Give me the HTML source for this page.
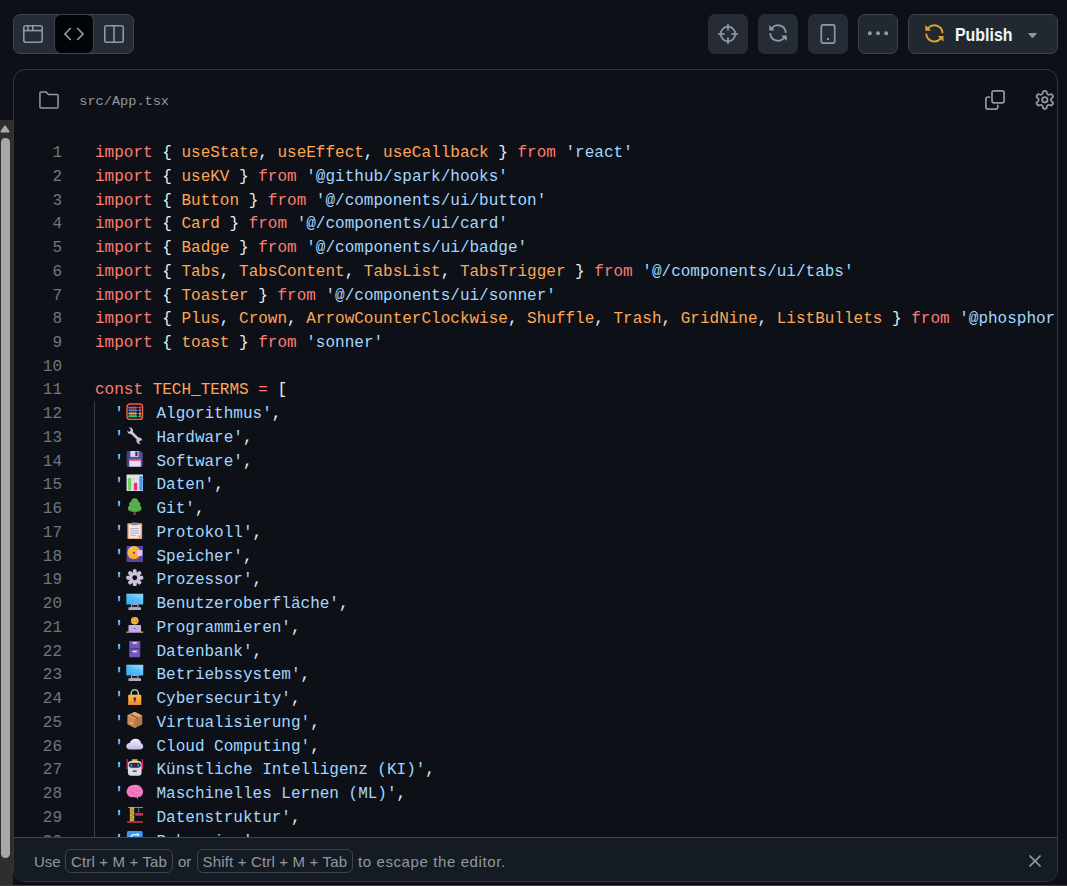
<!DOCTYPE html>
<html><head><meta charset="utf-8">
<style>
*{box-sizing:border-box}
html,body{margin:0;padding:0}
body{width:1067px;height:886px;overflow:hidden;position:relative;background:#0d1117;font-family:"Liberation Sans",sans-serif}
.abs{position:absolute}
.seg{left:13px;top:14px;width:121px;height:40px;background:#262c36;border:1px solid #3d444d;border-radius:7px}
.segact{left:54px;top:14px;width:40px;height:40px;background:#010409;border:1px solid #3d444d;border-radius:7px}
.ib{top:14px;width:40px;height:40px;background:#262c36;border-radius:7px}
.ib2{border:1px solid #3d444d;background:#212830}
.pub{left:908px;top:14px;width:150px;height:40px;background:#212830;border:1px solid #3d444d;border-radius:7px}
.pubt{left:955px;top:24.6px;font:bold 17.6px "Liberation Sans",sans-serif;color:#f0f6fc;line-height:20px;transform:scaleX(0.905);transform-origin:0 0}
.panel{left:13px;top:69px;width:1045px;height:813px;border:1px solid #30363d;border-radius:12px;background:#0d1117;overflow:hidden}
.fname{left:79.3px;top:94px;font:13.6px "Liberation Mono",monospace;color:#9198a1;line-height:16px;white-space:pre}
.ln{position:absolute;left:20px;width:42px;text-align:right;font:16px/23.74px "Liberation Mono",monospace;color:#6e7681;white-space:pre}
.cl{position:absolute;left:95px;width:961px;overflow:hidden;font:16px/23.74px "Liberation Mono",monospace;color:#e6edf3;white-space:pre;height:23.74px}
.k{color:#ff7b72}.o{color:#ffa657}.s{color:#a5d6ff}.p{color:#e6edf3}
.em{display:inline-block;width:23.1px;height:17px;vertical-align:top;position:relative}
.em svg{position:absolute;left:2.2px;top:-0.4px;width:17.5px;height:17.5px}
.guide{left:94px;top:401px;width:1px;height:440px;background:#3a3d42}
.foot{left:14px;top:837px;width:1043px;height:44px;background:#151b23;border-top:1px solid #3d444d;border-radius:0 0 11px 11px}
.ft{font:15px "Liberation Sans",sans-serif;color:#9198a1;line-height:18px;top:852.5px;white-space:pre}
.kbd{top:849px;height:24px;border:1px solid #3d444d;border-radius:6px}
.sb{left:0;top:120px;width:13px;height:765px;background:#2e2e2e}
.thumb{left:1px;top:138px;width:9px;height:720px;background:#a8a8a8;border-radius:4.5px}
</style></head><body>
<!-- segmented control -->
<div class="abs seg"></div>
<div class="abs segact"></div>
<svg class="abs" style="left:23px;top:25px" width="20" height="18" viewBox="0 0 20 18" fill="none" stroke="#9198a1" stroke-width="1.6">
 <rect x="0.8" y="0.8" width="18.4" height="16.4" rx="2"/><line x1="0.8" y1="5.6" x2="19.2" y2="5.6"/>
 <line x1="5" y1="1" x2="5" y2="5.6"/><line x1="9.8" y1="1" x2="9.8" y2="5.6"/>
</svg>
<svg class="abs" style="left:64px;top:27px" width="20" height="14" viewBox="0 0 20 14" fill="none" stroke="#9198a1" stroke-width="1.7">
 <polyline points="6.8,1 1,7 6.8,13"/><polyline points="13.2,1 19,7 13.2,13"/>
</svg>
<svg class="abs" style="left:104px;top:25px" width="20" height="18" viewBox="0 0 20 18" fill="none" stroke="#9198a1" stroke-width="1.6">
 <rect x="0.8" y="0.8" width="18.4" height="16.4" rx="1.5"/><line x1="10" y1="1" x2="10" y2="17"/>
</svg>

<!-- right buttons -->
<div class="abs ib" style="left:708px"></div>
<div class="abs ib" style="left:758px"></div>
<div class="abs ib" style="left:808px"></div>
<div class="abs ib ib2" style="left:858px"></div>
<svg class="abs" style="left:718px;top:24px" width="20" height="20" viewBox="0 0 20 20" fill="none" stroke="#9198a1" stroke-width="1.7">
 <circle cx="10" cy="10" r="7.3"/><line x1="10" y1="0" x2="10" y2="6.6"/><line x1="10" y1="13.4" x2="10" y2="20"/><line x1="0" y1="10" x2="6.6" y2="10"/><line x1="13.4" y1="10" x2="20" y2="10"/>
</svg>
<svg class="abs" style="left:767.8px;top:23.4px" width="20" height="20" viewBox="0 0 16 16"><path fill="#9198a1" d="M1.705 8.005a.75.75 0 0 1 .834.656 5.5 5.5 0 0 0 9.592 2.97l-1.204-1.204a.25.25 0 0 1 .177-.427h3.646a.25.25 0 0 1 .25.25v3.646a.25.25 0 0 1-.427.177l-1.38-1.38A7.002 7.002 0 0 1 1.05 8.84a.75.75 0 0 1 .656-.834ZM8 2.5a5.487 5.487 0 0 0-4.131 1.869l1.204 1.204A.25.25 0 0 1 4.896 6H1.25A.25.25 0 0 1 1 5.75V2.104a.25.25 0 0 1 .427-.177l1.38 1.38A7.002 7.002 0 0 1 14.95 7.16a.75.75 0 0 1-1.49.178A5.5 5.5 0 0 0 8 2.5Z"/></svg>
<svg class="abs" style="left:818px;top:24px" width="20" height="20" viewBox="0 0 20 20" fill="none" stroke="#9198a1" stroke-width="1.7">
 <rect x="3.3" y="0.8" width="13.4" height="18.4" rx="1.8"/><rect x="9" y="14" width="2" height="2" fill="#9198a1" stroke="none"/>
</svg>
<svg class="abs" style="left:868px;top:24px" width="20" height="20" viewBox="0 0 20 20" fill="#9198a1">
 <circle cx="1.8" cy="9.35" r="2"/><circle cx="10" cy="9.35" r="2"/><circle cx="18.2" cy="9.35" r="2"/>
</svg>
<div class="abs pub"></div>
<svg class="abs" style="left:923.6px;top:23px" width="20.8" height="20.8" viewBox="0 0 16 16"><path fill="#d9a334" d="M1.705 8.005a.75.75 0 0 1 .834.656 5.5 5.5 0 0 0 9.592 2.97l-1.204-1.204a.25.25 0 0 1 .177-.427h3.646a.25.25 0 0 1 .25.25v3.646a.25.25 0 0 1-.427.177l-1.38-1.38A7.002 7.002 0 0 1 1.05 8.84a.75.75 0 0 1 .656-.834ZM8 2.5a5.487 5.487 0 0 0-4.131 1.869l1.204 1.204A.25.25 0 0 1 4.896 6H1.25A.25.25 0 0 1 1 5.75V2.104a.25.25 0 0 1 .427-.177l1.38 1.38A7.002 7.002 0 0 1 14.95 7.16a.75.75 0 0 1-1.49.178A5.5 5.5 0 0 0 8 2.5Z"/></svg>
<div class="abs pubt">Publish</div>
<svg class="abs" style="left:1027.5px;top:32.5px" width="9" height="5.4" viewBox="0 0 9 5.4"><polygon points="0.6,0.5 8.4,0.5 4.5,4.9" fill="#9198a1" stroke="#9198a1" stroke-width="0.9" stroke-linejoin="round"/></svg>

<!-- panel -->
<div class="abs panel"></div>
<svg class="abs" style="left:39px;top:91px" width="20" height="18" viewBox="0 0 21 18" preserveAspectRatio="none" fill="none" stroke="#9198a1" stroke-width="1.6">
 <path d="M1 2 Q1 1 2 1 H7.5 L10 3.5 H19 Q20 3.5 20 4.5 V16 Q20 17 19 17 H2 Q1 17 1 16 Z"/>
</svg>
<div class="abs fname">src/App.tsx</div>
<svg class="abs" style="left:985px;top:90px" width="20" height="20" viewBox="0 0 20 20" fill="none" stroke="#9198a1" stroke-width="1.7" stroke-linecap="round">
 <rect x="7" y="0.9" width="12.1" height="11.9" rx="2"/><path d="M4.6 7 H2.9 Q0.9 7 0.9 9 V17.1 Q0.9 19.1 2.9 19.1 H10.8 Q12.8 19.1 12.8 17.1 V15.4"/>
</svg>
<svg class="abs" style="left:1034.4px;top:88.9px" width="21.6" height="21.6" viewBox="0 0 24 24" fill="none" stroke="#9198a1" stroke-width="2" stroke-linecap="round" stroke-linejoin="round"><path d="M12.22 2h-.44a2 2 0 0 0-2 2v.18a2 2 0 0 1-1 1.730l-.43.25a2 2 0 0 1-2 0l-.15-.08a2 2 0 0 0-2.73.73l-.22.38a2 2 0 0 0 .73 2.73l.15.1a2 2 0 0 1 1 1.72v.51a2 2 0 0 1-1 1.74l-.15.09a2 2 0 0 0-.73 2.73l.22.38a2 2 0 0 0 2.73.73l.15-.08a2 2 0 0 1 2 0l.43.25a2 2 0 0 1 1 1.73V20a2 2 0 0 0 2 2h.44a2 2 0 0 0 2-2v-.18a2 2 0 0 1 1-1.73l.43-.25a2 2 0 0 1 2 0l.15.08a2 2 0 0 0 2.73-.73l.22-.39a2 2 0 0 0-.73-2.73l-.15-.08a2 2 0 0 1-1-1.740v-.5a2 2 0 0 1 1-1.74l.15-.09a2 2 0 0 0 .73-2.73l-.22-.38a2 2 0 0 0-2.73-.73l-.15.08a2 2 0 0 1-2 0l-.43-.25a2 2 0 0 1-1-1.73V4a2 2 0 0 0-2-2z"/><circle cx="12" cy="12" r="3"/></svg>
<div class="ln" style="top:142.06px">1</div><div class="cl" style="top:142.06px"><span class="k">import</span><span class="p"> { </span><span class="o">useState</span><span class="p">, </span><span class="o">useEffect</span><span class="p">, </span><span class="o">useCallback</span><span class="p"> } </span><span class="k">from</span><span class="p"> </span><span class="s">&#x27;react&#x27;</span></div>
<div class="ln" style="top:165.80px">2</div><div class="cl" style="top:165.80px"><span class="k">import</span><span class="p"> { </span><span class="o">useKV</span><span class="p"> } </span><span class="k">from</span><span class="p"> </span><span class="s">&#x27;@github/spark/hooks&#x27;</span></div>
<div class="ln" style="top:189.54px">3</div><div class="cl" style="top:189.54px"><span class="k">import</span><span class="p"> { </span><span class="o">Button</span><span class="p"> } </span><span class="k">from</span><span class="p"> </span><span class="s">&#x27;@/components/ui/button&#x27;</span></div>
<div class="ln" style="top:213.28px">4</div><div class="cl" style="top:213.28px"><span class="k">import</span><span class="p"> { </span><span class="o">Card</span><span class="p"> } </span><span class="k">from</span><span class="p"> </span><span class="s">&#x27;@/components/ui/card&#x27;</span></div>
<div class="ln" style="top:237.02px">5</div><div class="cl" style="top:237.02px"><span class="k">import</span><span class="p"> { </span><span class="o">Badge</span><span class="p"> } </span><span class="k">from</span><span class="p"> </span><span class="s">&#x27;@/components/ui/badge&#x27;</span></div>
<div class="ln" style="top:260.76px">6</div><div class="cl" style="top:260.76px"><span class="k">import</span><span class="p"> { </span><span class="o">Tabs</span><span class="p">, </span><span class="o">TabsContent</span><span class="p">, </span><span class="o">TabsList</span><span class="p">, </span><span class="o">TabsTrigger</span><span class="p"> } </span><span class="k">from</span><span class="p"> </span><span class="s">&#x27;@/components/ui/tabs&#x27;</span></div>
<div class="ln" style="top:284.50px">7</div><div class="cl" style="top:284.50px"><span class="k">import</span><span class="p"> { </span><span class="o">Toaster</span><span class="p"> } </span><span class="k">from</span><span class="p"> </span><span class="s">&#x27;@/components/ui/sonner&#x27;</span></div>
<div class="ln" style="top:308.24px">8</div><div class="cl" style="top:308.24px"><span class="k">import</span><span class="p"> { </span><span class="o">Plus</span><span class="p">, </span><span class="o">Crown</span><span class="p">, </span><span class="o">ArrowCounterClockwise</span><span class="p">, </span><span class="o">Shuffle</span><span class="p">, </span><span class="o">Trash</span><span class="p">, </span><span class="o">GridNine</span><span class="p">, </span><span class="o">ListBullets</span><span class="p"> } </span><span class="k">from</span><span class="p"> </span><span class="s">&#x27;@phosphor-icons/react&#x27;</span></div>
<div class="ln" style="top:331.98px">9</div><div class="cl" style="top:331.98px"><span class="k">import</span><span class="p"> { </span><span class="o">toast</span><span class="p"> } </span><span class="k">from</span><span class="p"> </span><span class="s">&#x27;sonner&#x27;</span></div>
<div class="ln" style="top:355.72px">10</div><div class="cl" style="top:355.72px"></div>
<div class="ln" style="top:379.46px">11</div><div class="cl" style="top:379.46px"><span class="k">const</span><span class="p"> </span><span class="o">TECH_TERMS</span><span class="p"> </span><span class="k">=</span><span class="p"> [</span></div>
<div class="ln" style="top:403.20px">12</div><div class="cl" style="top:403.20px"><span class="p">  </span><span class="s">&#x27;</span><span class="em"><svg viewBox="0 0 32 32"><rect x="1.8" y="1.8" width="28.4" height="28.4" rx="5.5" fill="#15101c" stroke="#f4603a" stroke-width="2.6"/><g stroke="#b8a9c2" stroke-width="0.8"><line x1="4" y1="8.4" x2="28" y2="8.4"/><line x1="4" y1="13.4" x2="28" y2="13.4"/><line x1="4" y1="19.2" x2="28" y2="19.2"/><line x1="4" y1="24.2" x2="28" y2="24.2"/></g><g fill="#e8457f"><circle cx="6.8" cy="8.4" r="2.2"/><circle cx="10.4" cy="8.4" r="2.2"/><circle cx="14" cy="8.4" r="2.2"/><circle cx="17.6" cy="8.4" r="2.2"/><circle cx="25.6" cy="8.4" r="2.2"/></g><g fill="#3f8fe8"><circle cx="6.8" cy="13.4" r="2.2"/><circle cx="10.4" cy="13.4" r="2.2"/><circle cx="14" cy="13.4" r="2.2"/><circle cx="17.6" cy="13.4" r="2.2"/><circle cx="25.6" cy="13.4" r="2.2"/></g><g fill="#f3a72c"><circle cx="6.8" cy="19.2" r="2.2"/><circle cx="10.4" cy="19.2" r="2.2"/><circle cx="14" cy="19.2" r="2.2"/><circle cx="17.6" cy="19.2" r="2.2"/><circle cx="25.6" cy="19.2" r="2.2"/></g><g fill="#3cbf6a"><circle cx="6.8" cy="24.2" r="2.2"/><circle cx="10.4" cy="24.2" r="2.2"/><circle cx="14" cy="24.2" r="2.2"/><circle cx="17.6" cy="24.2" r="2.2"/><circle cx="25.6" cy="24.2" r="2.2"/></g></svg>
</span><span class="s"> Algorithmus&#x27;</span><span class="p">,</span></div>
<div class="ln" style="top:426.94px">13</div><div class="cl" style="top:426.94px"><span class="p">  </span><span class="s">&#x27;</span><span class="em"><svg viewBox="0 0 32 32"><path d="M9 9 L24.5 24" stroke="#cfc6dc" stroke-width="5" stroke-linecap="round"/><path d="M2.2 6.5 L5.5 9.2 L9 7.5 L8 3 L4.5 1 C7 0.5 10.5 1 12 3.5 C13.5 6 13 9 11.5 11 L9 12.5 C6 13.5 2.5 11 2.2 6.5 Z" fill="#cfc6dc"/><path d="M29.8 25.5 L26.5 22.8 L23 24.5 L24 29 L27.5 31 C25 31.5 21.5 31 20 28.5 C18.5 26 19 23 20.5 21 L23 19.5 C26 18.5 29.5 21 29.8 25.5 Z" fill="#cfc6dc"/></svg>
</span><span class="s"> Hardware&#x27;</span><span class="p">,</span></div>
<div class="ln" style="top:450.68px">14</div><div class="cl" style="top:450.68px"><span class="p">  </span><span class="s">&#x27;</span><span class="em"><svg viewBox="0 0 32 32"><path d="M3 1.5 H26 L30.5 6 V28.5 Q30.5 30.5 28.5 30.5 H3.5 Q1.5 30.5 1.5 28.5 V3 Q1.5 1.5 3 1.5 Z" fill="#5b4d9e"/><rect x="1.5" y="1.5" width="5" height="29" fill="#4a3d86"/><rect x="8" y="1.5" width="15" height="11" fill="#ddd6e8"/><rect x="17" y="3" width="4" height="8" fill="#3a2f66"/><rect x="6" y="16.5" width="21" height="14" fill="#e6def0"/><rect x="6" y="16.5" width="21" height="3.2" fill="#ea4660"/></svg>
</span><span class="s"> Software&#x27;</span><span class="p">,</span></div>
<div class="ln" style="top:474.42px">15</div><div class="cl" style="top:474.42px"><span class="p">  </span><span class="s">&#x27;</span><span class="em"><svg viewBox="0 0 32 32"><rect x="1" y="1" width="30" height="30" rx="1.5" fill="#e4dfea"/><rect x="12.5" y="2" width="0.8" height="28" fill="#c6bfd0"/><rect x="24.5" y="2" width="0.8" height="28" fill="#c6bfd0"/><rect x="2" y="9.5" width="30" height="0.8" fill="#cfc8d8"/><rect x="3.5" y="7" width="6" height="23" rx="2" fill="#6fd35a"/><rect x="14.5" y="16" width="6" height="14" rx="2" fill="#ee2d78"/><rect x="24.5" y="3.5" width="6" height="26.5" rx="2" fill="#3b9cf0"/></svg>
</span><span class="s"> Daten&#x27;</span><span class="p">,</span></div>
<div class="ln" style="top:498.16px">16</div><div class="cl" style="top:498.16px"><span class="p">  </span><span class="s">&#x27;</span><span class="em"><svg viewBox="0 0 32 32"><rect x="13.5" y="24" width="5" height="8" fill="#6b3f3f"/><path d="M16 0.5 C11.5 0.5 9.5 3.5 9.5 6.5 C6 7.5 5 11.5 6.5 14 C3 15.5 2.5 21 6 23.5 C9 26 23 26 26 23.5 C29.5 21 29 15.5 25.5 14 C27 11.5 26 7.5 22.5 6.5 C22.5 3.5 20.5 0.5 16 0.5 Z" fill="#56b04e"/><path d="M8 14 C12 16.5 20 16.5 24 14" stroke="#46963f" stroke-width="1" fill="none"/><path d="M6 22 C11 25 21 25 26 22" stroke="#46963f" stroke-width="1" fill="none"/></svg>
</span><span class="s"> Git&#x27;</span><span class="p">,</span></div>
<div class="ln" style="top:521.90px">17</div><div class="cl" style="top:521.90px"><span class="p">  </span><span class="s">&#x27;</span><span class="em"><svg viewBox="0 0 32 32"><rect x="2.5" y="2.5" width="27" height="29" rx="1.5" fill="#eba463"/><rect x="5" y="5" width="22" height="24.5" fill="#ece7f2"/><rect x="10" y="1" width="12" height="5" rx="2" fill="#8e8599"/><g fill="#9d95a8"><rect x="8" y="11.5" width="16" height="1.3"/><rect x="8" y="15.5" width="16" height="1.3"/><rect x="8" y="19.5" width="16" height="1.3"/><rect x="8" y="23.5" width="10" height="1.3"/></g><path d="M21 29.5 L27 23.5 V29.5 Z" fill="#f5a04e"/><path d="M21 29.5 L27 23.5 L21 23.5 Z" fill="#d7cfe2"/></svg>
</span><span class="s"> Protokoll&#x27;</span><span class="p">,</span></div>
<div class="ln" style="top:545.64px">18</div><div class="cl" style="top:545.64px"><span class="p">  </span><span class="s">&#x27;</span><span class="em"><svg viewBox="0 0 32 32"><defs><linearGradient id="dvg" x1="0" y1="0" x2="1" y2="1"><stop offset="0" stop-color="#fbc846"/><stop offset="1" stop-color="#f59e2e"/></linearGradient></defs><rect x="1" y="1" width="30" height="30" rx="1.5" fill="#5a45a6"/><circle cx="14.5" cy="14" r="12" fill="url(#dvg)"/><circle cx="14.5" cy="14" r="1.8" fill="#4a3a9a"/><rect x="20" y="9" width="10" height="11" rx="1.5" fill="#d8c8f2"/></svg>
</span><span class="s"> Speicher&#x27;</span><span class="p">,</span></div>
<div class="ln" style="top:569.38px">19</div><div class="cl" style="top:569.38px"><span class="p">  </span><span class="s">&#x27;</span><span class="em"><svg viewBox="0 0 32 32"><g fill="#cbc2d8"><circle cx="16" cy="16" r="10.5"/><rect x="12.5" y="0.5" width="7" height="8" rx="2.5"/><rect x="12.5" y="23.5" width="7" height="8" rx="2.5"/><rect x="0.5" y="12.5" width="8" height="7" rx="2.5"/><rect x="23.5" y="12.5" width="8" height="7" rx="2.5"/><g transform="rotate(45 16 16)"><rect x="12.5" y="0.5" width="7" height="8" rx="2.5"/><rect x="12.5" y="23.5" width="7" height="8" rx="2.5"/><rect x="0.5" y="12.5" width="8" height="7" rx="2.5"/><rect x="23.5" y="12.5" width="8" height="7" rx="2.5"/></g></g><circle cx="16" cy="16" r="4.5" fill="#0d1117"/></svg>
</span><span class="s"> Prozessor&#x27;</span><span class="p">,</span></div>
<div class="ln" style="top:593.12px">20</div><div class="cl" style="top:593.12px"><span class="p">  </span><span class="s">&#x27;</span><span class="em"><svg viewBox="0 0 32 32"><defs><linearGradient id="dsk" x1="0" y1="1" x2="1" y2="0"><stop offset="0" stop-color="#2fa8f5"/><stop offset="1" stop-color="#7fd0f8"/></linearGradient></defs><rect x="0.5" y="1.5" width="31" height="19.5" rx="1" fill="url(#dsk)"/><path d="M0.5 1.5 H31.5 V12 Z" fill="#ffffff" opacity="0.15"/><rect x="10" y="21" width="12" height="5" rx="1.5" fill="none" stroke="#a9a3b2" stroke-width="2"/><rect x="4.5" y="26" width="23" height="6" rx="1" fill="#b2acbb"/></svg>
</span><span class="s"> Benutzeroberfläche&#x27;</span><span class="p">,</span></div>
<div class="ln" style="top:616.86px">21</div><div class="cl" style="top:616.86px"><span class="p">  </span><span class="s">&#x27;</span><span class="em"><svg viewBox="0 0 32 32"><circle cx="16" cy="8.5" r="7" fill="#f7b43c"/><path d="M9 8 C8.5 1 23.5 1 23 8 C21 4.5 11 4.5 9 8 Z" fill="#ea9a22"/><circle cx="13.3" cy="9.5" r="1" fill="#6a4a5a"/><circle cx="18.7" cy="9.5" r="1" fill="#6a4a5a"/><rect x="4.5" y="16.5" width="23" height="13" rx="1.5" fill="#c2b2e2"/><circle cx="16" cy="23" r="1.3" fill="#6a5a90"/><rect x="0.5" y="28.3" width="5" height="2.5" rx="1" fill="#f5b43a"/><rect x="26.5" y="28.3" width="5" height="2.5" rx="1" fill="#f5b43a"/><rect x="3" y="28.8" width="26" height="1.8" fill="#a898c8"/></svg>
</span><span class="s"> Programmieren&#x27;</span><span class="p">,</span></div>
<div class="ln" style="top:640.60px">22</div><div class="cl" style="top:640.60px"><span class="p">  </span><span class="s">&#x27;</span><span class="em"><svg viewBox="0 0 32 32"><rect x="6" y="0.5" width="20" height="31" rx="1" fill="#6a4fae"/><rect x="7" y="1.5" width="18" height="13" fill="#7557bb"/><rect x="7" y="17" width="18" height="13.5" fill="#7557bb"/><rect x="6" y="14.5" width="20" height="2.5" fill="#4e3990"/><rect x="12" y="4" width="8" height="3" rx="0.8" fill="#f0e8ff"/><rect x="12" y="19.5" width="8" height="3" rx="0.8" fill="#f0e8ff"/></svg>
</span><span class="s"> Datenbank&#x27;</span><span class="p">,</span></div>
<div class="ln" style="top:664.34px">23</div><div class="cl" style="top:664.34px"><span class="p">  </span><span class="s">&#x27;</span><span class="em"><svg viewBox="0 0 32 32"><defs><linearGradient id="dsk" x1="0" y1="1" x2="1" y2="0"><stop offset="0" stop-color="#2fa8f5"/><stop offset="1" stop-color="#7fd0f8"/></linearGradient></defs><rect x="0.5" y="1.5" width="31" height="19.5" rx="1" fill="url(#dsk)"/><path d="M0.5 1.5 H31.5 V12 Z" fill="#ffffff" opacity="0.15"/><rect x="10" y="21" width="12" height="5" rx="1.5" fill="none" stroke="#a9a3b2" stroke-width="2"/><rect x="4.5" y="26" width="23" height="6" rx="1" fill="#b2acbb"/></svg>
</span><span class="s"> Betriebssystem&#x27;</span><span class="p">,</span></div>
<div class="ln" style="top:688.08px">24</div><div class="cl" style="top:688.08px"><span class="p">  </span><span class="s">&#x27;</span><span class="em"><svg viewBox="0 0 32 32"><defs><linearGradient id="lkg" x1="0" y1="0" x2="0" y2="1"><stop offset="0" stop-color="#fcc042"/><stop offset="1" stop-color="#f5832c"/></linearGradient></defs><path d="M9.5 14 V9.5 A6.5 6.5 0 0 1 22.5 9.5 V14" stroke="#bdb6c6" stroke-width="2.8" fill="none"/><rect x="4" y="12.5" width="24" height="19" rx="1.5" fill="url(#lkg)"/><circle cx="16" cy="19.5" r="2.6" fill="#3b2f70"/><rect x="14.7" y="19.5" width="2.6" height="6.5" rx="1" fill="#3b2f70"/></svg>
</span><span class="s"> Cybersecurity&#x27;</span><span class="p">,</span></div>
<div class="ln" style="top:711.82px">25</div><div class="cl" style="top:711.82px"><span class="p">  </span><span class="s">&#x27;</span><span class="em"><svg viewBox="0 0 32 32"><path d="M16 1.5 L29.5 8 V24 L16 31 L2.5 24 V8 Z" fill="#c88a52"/><path d="M16 14.5 L29.5 8 V24 L16 31 Z" fill="#b87842"/><path d="M2.5 8 L16 14.5 L29.5 8 L16 1.5 Z" fill="#e0a672"/><path d="M8.5 5 L22 11.2 V15 L8.5 8.5 Z" fill="#9a6035"/><path d="M8 21 L11.5 23" stroke="#e8dcec" stroke-width="2"/></svg>
</span><span class="s"> Virtualisierung&#x27;</span><span class="p">,</span></div>
<div class="ln" style="top:735.56px">26</div><div class="cl" style="top:735.56px"><span class="p">  </span><span class="s">&#x27;</span><span class="em"><svg viewBox="0 0 32 32"><defs><linearGradient id="cld" x1="0" y1="0" x2="0" y2="1"><stop offset="0" stop-color="#f3f0f8"/><stop offset="1" stop-color="#c4b8e6"/></linearGradient></defs><path d="M7 26.5 C3 26.5 0.5 24 0.5 20.5 C0.5 17 3.5 14.5 7 14.8 C8 10 12 7 17.5 7 C23 7 27 10.5 27.5 15 C30 15.8 31.5 18 31.5 21 C31.5 24 29 26.5 25.5 26.5 Z" fill="url(#cld)"/></svg>
</span><span class="s"> Cloud Computing&#x27;</span><span class="p">,</span></div>
<div class="ln" style="top:759.30px">27</div><div class="cl" style="top:759.30px"><span class="p">  </span><span class="s">&#x27;</span><span class="em"><svg viewBox="0 0 32 32"><rect x="10.5" y="0.5" width="11" height="3.5" rx="1.5" fill="#f3b43a"/><rect x="1" y="0" width="2.2" height="19" rx="1" fill="#e33060"/><rect x="28.8" y="0" width="2.2" height="19" rx="1" fill="#e33060"/><rect x="3.5" y="3.5" width="25" height="27" rx="6" fill="#e0dae8"/><rect x="5" y="7" width="22" height="9" rx="4.5" fill="#2f2747"/><rect x="8.5" y="9" width="2.2" height="5" rx="1.1" fill="#4ec6f5"/><rect x="21.3" y="9" width="2.2" height="5" rx="1.1" fill="#4ec6f5"/><rect x="12.5" y="21" width="7" height="2.5" fill="#3f3654"/></svg>
</span><span class="s"> Künstliche Intelligenz (KI)&#x27;</span><span class="p">,</span></div>
<div class="ln" style="top:783.04px">28</div><div class="cl" style="top:783.04px"><span class="p">  </span><span class="s">&#x27;</span><span class="em"><svg viewBox="0 0 32 32"><path d="M15 3.5 C9 3.5 4 6 2.5 11 C0.5 13.5 0.5 19 3 21.5 C4.5 25.5 10 27 13.5 25.5 C16 27 19 26.5 20 25 C24 26.5 28.5 24.5 30 20.5 C32 17.5 31.5 11.5 28.5 9.5 C26.5 5 21 3 15 3.5 Z" fill="#f47cc4"/><path d="M18.5 25.5 L21 30 L22.5 25 Z" fill="#e86ab5"/><path d="M8 11 C11 9 13 12 16 10.5 M5 17 C8.5 15 12 18.5 15 16 M18 15 C21 13 24 16 27.5 14 M11 21.5 C15 19.5 19 22.5 23 20.5" stroke="#d857a6" stroke-width="1" fill="none"/></svg>
</span><span class="s"> Maschinelles Lernen (ML)&#x27;</span><span class="p">,</span></div>
<div class="ln" style="top:806.78px">29</div><div class="cl" style="top:806.78px"><span class="p">  </span><span class="s">&#x27;</span><span class="em"><svg viewBox="0 0 32 32"><rect x="4" y="1" width="27" height="2.2" fill="#eab53a"/><rect x="7" y="2" width="8" height="26" fill="#e2a83c"/><path d="M7.5 5 L14.5 9 L7.5 13 L14.5 17 L7.5 21 L14.5 25" stroke="#8a6a2a" stroke-width="1.2" fill="none"/><rect x="2" y="28" width="29" height="2.5" fill="#e23c4a"/><path d="M23 3 V10" stroke="#b5acb8" stroke-width="1"/><path d="M20.5 12 L23 9 L25.5 12" stroke="#9a8f9e" stroke-width="1" fill="none"/><rect x="17" y="13" width="14" height="4.5" fill="#e23c4a"/><path d="M18 17.5 L20 13 L22 17.5 L24 13 L26 17.5 L28 13 L30 17.5" stroke="#a3283a" stroke-width="1" fill="none"/></svg>
</span><span class="s"> Datenstruktur&#x27;</span><span class="p">,</span></div>
<div class="ln" style="top:830.52px">30</div><div class="cl" style="top:830.52px"><span class="p">  </span><span class="s">&#x27;</span><span class="em"><svg viewBox="0 0 32 32"><rect x="1.5" y="1.5" width="29" height="29" rx="4" fill="#3d97ee"/><path d="M9 14 C9 9.5 12 8.5 16 8.5 H23" stroke="#eef4fb" stroke-width="2.5" fill="none"/><path d="M20.5 5 L25 8.5 L20.5 12 Z" fill="#eef4fb"/></svg>
</span><span class="s"> Rekursion&#x27;</span><span class="p">,</span></div>
<div class="abs guide"></div>

<!-- footer -->
<div class="abs foot"></div>
<div class="abs ft" style="left:34px">Use</div>
<div class="abs kbd" style="left:65px;width:108px"></div>
<div class="abs ft" style="left:71px;letter-spacing:0.15px">Ctrl + M + Tab</div>
<div class="abs ft" style="left:178px">or</div>
<div class="abs kbd" style="left:197px;width:156px"></div>
<div class="abs ft" style="left:202.5px;letter-spacing:0.17px">Shift + Ctrl + M + Tab</div>
<div class="abs ft" style="left:358px;letter-spacing:0.6px">to escape the editor.</div>
<svg class="abs" style="left:1029px;top:855px" width="12" height="12" viewBox="0 0 12 12" stroke="#9198a1" stroke-width="1.6"><line x1="0.5" y1="0.5" x2="11.5" y2="11.5"/><line x1="11.5" y1="0.5" x2="0.5" y2="11.5"/></svg>

<!-- scrollbar -->
<div class="abs sb"></div>
<svg class="abs" style="left:0px;top:124.5px" width="10" height="8" viewBox="0 0 10 8"><polygon points="5,1.3 8.7,6.6 1.3,6.6" fill="#a8a8a8" stroke="#a8a8a8" stroke-width="1.7" stroke-linejoin="round"/></svg>
<div class="abs thumb"></div>
<div class="abs" style="left:0;top:885px;width:1067px;height:1px;background:#3c3c3c"></div>
</body></html>
